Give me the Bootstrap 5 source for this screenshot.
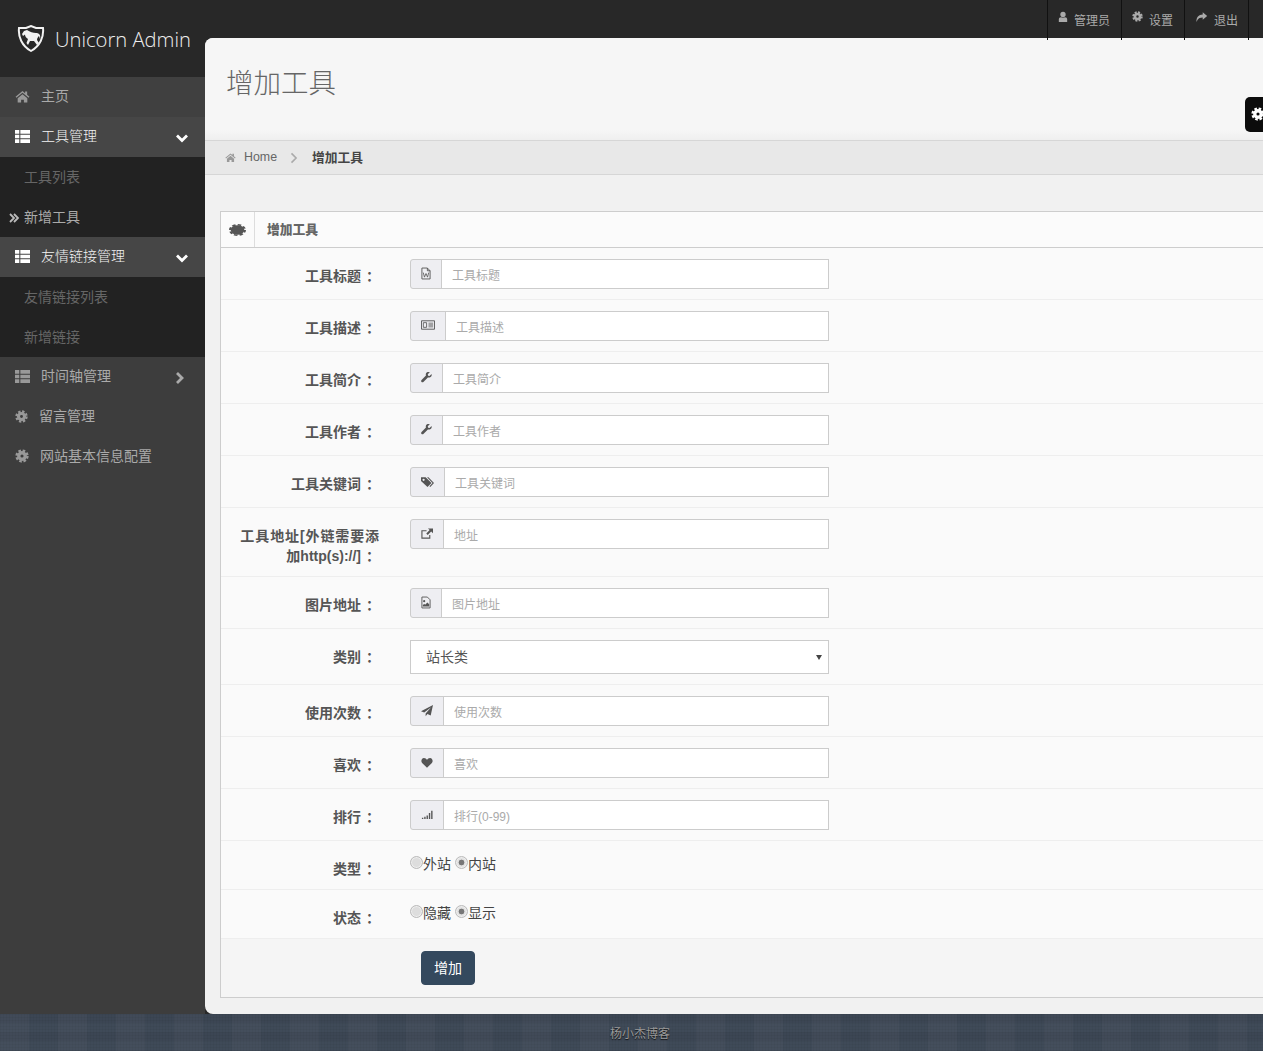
<!DOCTYPE html>
<html lang="zh">
<head>
<meta charset="utf-8">
<title>增加工具</title>
<link href="https://cdn.jsdelivr.net/npm/bootstrap@5.3.0/dist/css/bootstrap.min.css" rel="stylesheet">
<style>
html,body{height:100%;overflow:hidden}
body{font-family:"Liberation Sans","Noto Sans CJK SC",sans-serif;font-size:14px;background:#282828;color:#555}
.uni-shell{height:1014px}
.uni-side{width:205px;flex:none;background:#3d3d3d}
.uni-logo{height:77px;background:#282828;color:#eee;padding-left:17px}
.uni-logo span{font-family:"Open Sans",sans-serif;font-weight:300;font-size:20.2px;margin-left:10px;position:relative;top:1px}
.uni-menu a{display:flex;align-items:center;height:40px;color:#aaa;text-decoration:none;padding:0 0 2px 15px;position:relative;white-space:nowrap}
.uni-menu a svg.lead-ic{margin-right:11px;color:#999}
.uni-home{background:#404040}
.uni-menu a.uni-open{background:#464646;color:#f4f4f4;font-weight:300}
.uni-menu a.uni-open svg{color:#fff}
.uni-menu a .uni-arrow{position:absolute;left:175px;top:14px;margin:0}
.uni-menu a .uni-shut{left:173px;color:#aaa}
.uni-menu a.uni-sub{background:#222;color:#666;padding:0 0 0 24px}
.uni-menu a.uni-sub.uni-now{color:#aaa}
.uni-menu a.uni-sub.uni-now svg{position:absolute;left:9px;top:16px;color:#bbb}
.uni-main{flex:1 1 auto;min-width:0;display:flex;flex-direction:column}
.uni-top{height:38px;flex:none;background:#282828;padding-right:14px;position:relative;z-index:2}
.uni-top a{height:40px;color:#aaa;font-size:12px;text-decoration:none;border-left:1px solid #111;display:flex;align-items:flex-start;padding:13px 11px 0 10px;line-height:16px}
.uni-top a:last-child{border-right:1px solid #111;padding-right:10px}
.uni-top a svg{margin-right:6px;margin-top:-2px;color:#aaa}
.uni-page{flex:1 1 auto;background:#f1f1f1;border-radius:8px 0 0 8px;position:relative;min-height:0}
.uni-head{height:92px;background:#f6f6f6;border-radius:8px 0 0 0;padding:24px 0 0 21px}
.uni-head h1{font-size:27.5px;line-height:44px;font-weight:300;color:#666;margin:0}
.uni-fade{height:10px;background:linear-gradient(#f6f6f6,#efefef)}
.uni-crumb{height:35px;background:#e8e8e8;border-top:1px solid #d6d6d6;border-bottom:1px solid #d6d6d6;padding-left:20px;font-size:12.4px;color:#666}
.uni-crumb b{font-size:12.75px;color:#444;white-space:nowrap;margin-left:1px}
.uni-crumb svg.hm{color:#999;margin-right:8px}
.uni-crumb svg.sp{color:#aaa;margin:0 12px 0 12px}
.uni-gear{position:absolute;right:0;top:59px;width:18px;height:35px;background:#0c0c0c;border-radius:5px 0 0 5px;color:#fff;padding:10px 0 0 6px;overflow:hidden}
.uni-gear svg{display:block}
.uni-box{margin:36px -20px 0 15px;border:1px solid #cdcdcd;background:#fafafa}
.uni-box-title{height:36px;border-bottom:1px solid #cdcdcd;background:#fbfbfb;font-size:12.75px;font-weight:700;color:#666}
.uni-box-ic{width:34px;height:35px;border-right:1px solid #ddd;color:#555}
.uni-box-title b{margin-left:12px;padding-top:1px}
.uni-row{border-bottom:1px solid #eee}
.uni-label{width:156px;flex:none;padding:18px 0 10px;text-align:right;font-weight:700;line-height:20px;color:#555;margin:0}
.uni-colon{font-family:"Noto Sans CJK TC",sans-serif;margin:0 -3px 0 5px;line-height:1}
.uni-wide{display:inline-block;letter-spacing:.9px;margin-right:-3px;white-space:nowrap}
.uni-ctl{margin-left:33px;padding:11px 0 10px;width:419px;flex:none}
.uni-ctl .input-group-text{height:30px;padding:0 10px;background:#eeeef2;border-color:#ccc;border-radius:3px 0 0 3px;color:#555}
.uni-ctl .input-group-text svg{margin-bottom:2px}
.uni-ctl .form-control{height:30px;padding:3px 10px 0;font-size:12px;line-height:25px;border-color:#ccc;border-radius:0}
.uni-ctl .form-control::placeholder{color:#aaa}
.uni-ctl .form-select{height:34px;padding:0 24px 0 15px;font-size:14px;color:#555;border-color:#ccc;border-radius:0;background-size:10px 8px;background-position:right 4px center;background-image:url("data:image/svg+xml,%3Csvg xmlns='http://www.w3.org/2000/svg' viewBox='0 0 10 8'%3E%3Cpath d='M2 2h6L5 7z' fill='%23444'/%3E%3C/svg%3E")}
.uni-radios{padding-top:13px;line-height:20px;color:#444;white-space:nowrap}
.uni-radios label{margin-right:4px;display:inline-flex;align-items:flex-start}
.uni-radios .form-check-input{width:13px;height:13px;margin:2px 0 0;background:#ddd;border:1px solid #bbb;box-shadow:inset 0 0 0 1px #eee;flex:none;float:none}
.uni-radios .form-check-input:checked{background:radial-gradient(circle,#777 0 2.6px,#e2e2e2 3.2px);border-color:#bbb}
.uni-actions{height:58px;background:#f5f5f5;padding:12px 0 0 200px}
.uni-actions .btn{width:54px;height:34px;padding:0;font-size:14px;background:#34495e;border:1px solid #34495e;border-radius:4px;color:#fff;line-height:32px}
.uni-foot{height:37px;color:#999;font-size:12px;padding:2px 0 0 17px;text-shadow:0 1px 1px #111;background-color:#3f4a58;
background-image:linear-gradient(90deg,rgba(255,255,255,.025) 50%,transparent 50%),linear-gradient(rgba(0,0,0,.05) 50%,transparent 50%),linear-gradient(90deg,rgba(0,0,0,.03) 1px,transparent 1px),linear-gradient(rgba(0,0,0,.03) 1px,transparent 1px);
background-size:58px 26px,38px 18px,3px 3px,3px 3px}
</style>
</head>
<body>
<svg width="0" height="0" class="d-block position-absolute">
<defs>
<symbol id="i-home" viewBox="0 0 16 14"><path fill="currentColor" d="M8 1 .5 7.300l1 1.100L8 3l6.500 5.400 1-1.100-2.500-2.100V1.500h-2.200v1.900zM2.800 8.800 8 4.500l5.200 4.300V13.500H9.500v-3h-3v3H2.800z"/></symbol>
<symbol id="i-list" viewBox="1 1 14 12"><path fill="currentColor" d="M1 1h4v3.400H1zM6 1h9v3.400H6zM1 5.300h4v3.400H1zM6 5.300h9v3.400H6zM1 9.600h4v3.400H1zM6 9.600h9v3.400H6z"/></symbol>
<symbol id="i-down" viewBox="0 0 14 14"><path fill="none" stroke="currentColor" stroke-width="2.800" d="m2 4.500 5 5 5-5"/></symbol>
<symbol id="i-right" viewBox="0 0 14 14"><path fill="none" stroke="currentColor" stroke-width="2.800" d="m4 2 5 5-5 5"/></symbol>
<symbol id="i-thin" viewBox="0 0 12 14"><path fill="none" stroke="currentColor" stroke-width="1.900" d="m3 1.500 5.500 5.500L3 12.500"/></symbol>
<symbol id="i-dbl" viewBox="0 0 10 10"><path fill="none" stroke="currentColor" stroke-width="1.800" d="m1 1 4 4-4 4M5 1l4 4-4 4"/></symbol>
<symbol id="i-cog" viewBox="0 0 16 16"><circle cx="8" cy="8" r="3.700" fill="none" stroke="currentColor" stroke-width="3.800"/><circle cx="8" cy="8" r="6.200" fill="none" stroke="currentColor" stroke-width="2.800" stroke-dasharray="2.900 1.970"/></symbol>
<symbol id="i-blob" viewBox="0 0 16 16" preserveAspectRatio="none"><circle cx="8" cy="8" r="6.400" fill="currentColor"/><circle cx="8" cy="8" r="7" fill="none" stroke="currentColor" stroke-width="2" stroke-dasharray="3.400 2.100"/></symbol>
<symbol id="i-user" viewBox="0 0 12 14"><circle cx="6" cy="4" r="3.200" fill="currentColor"/><path fill="currentColor" d="M1 13V9.500Q1 7.500 3.500 7.200L6 8l2.500-.8Q11 7.500 11 9.500V13z"/></symbol>
<symbol id="i-share" viewBox="0 0 16 14"><path fill="currentColor" d="M9.500 1 15 5.800l-5.500 4.700V7.700C6 7.700 3.500 8.800 1.800 13 1.500 7.500 4.500 4.100 9.500 4z"/></symbol>
<symbol id="i-word" viewBox="0 0 11 14"><path fill="none" stroke="currentColor" d="M1 1h6l3 3v9H1zM7 1v3h3"/><path fill="none" stroke="currentColor" stroke-width=".9" d="m2.500 6 1.300 5L5.500 7l1.700 4 1.300-5"/></symbol>
<symbol id="i-card" viewBox="0 0 15 12"><path fill="none" stroke="currentColor" d="M.5 1.500h14v9H.5z"/><path fill="none" stroke="currentColor" stroke-width=".9" d="M2.500 3.500h3.500v5H2.500z"/><path fill="currentColor" d="M8 3.500h5v1H8zM8 5.500h5v1H8zM8 7.500h5v1H8z"/></symbol>
<symbol id="i-wrench" viewBox="0 0 12 14"><path fill="currentColor" d="M11.500 3.200 9.300 5.300 7.800 5l-.4-1.500L9.600 1.300C8 .6 6.200 1 5.500 2.400c-.4.900-.4 1.800-.1 2.500L.6 9.800c-.6.600-.6 1.500 0 2s1.400.6 2 0l4.900-4.900c.8.300 1.700.3 2.500-.1 1.400-.7 2-2.200 1.500-3.600z"/></symbol>
<symbol id="i-tags" viewBox="0 0 14 14"><path fill="currentColor" d="M0 2.500h5l6.300 6.200-4.300 4.300L0 6.500zM2.800 4a1.200 1.200 0 1 0 0 2.400 1.200 1.200 0 0 0 0-2.400z" fill-rule="evenodd"/><path fill="currentColor" d="M6.500 2.500h1.500l6 6.200-4 4.300-.9-.9 3.300-3.400z"/></symbol>
<symbol id="i-ext" viewBox="0 0 13 14"><path fill="none" stroke="currentColor" stroke-width="1.200" d="M9.500 8.500v3.500H1V4h5"/><path fill="currentColor" d="M7.500 1.500H13v5.300l-2-2-3.700 3.800-1.600-1.600L9.400 3.300z"/></symbol>
<symbol id="i-pic" viewBox="0 0 11 14"><path fill="none" stroke="currentColor" d="M1 1h6l3 3v9H1z"/><circle cx="3.500" cy="5.500" r="1.200" fill="currentColor"/><path fill="currentColor" d="M2 11.500v-1.500l1.500-1.500 1 1L7 7l2 2v2.500z"/></symbol>
<symbol id="i-plane" viewBox="0 0 13 13"><path fill="currentColor" d="M13 .5 10.500 12 7 10.300 5 12.800V9.700L11 3 3.500 8.800 0 7.300z"/></symbol>
<symbol id="i-heart" viewBox="0 0 13 12"><path fill="currentColor" d="M6.500 11.800 1.200 6.500C-.4 4.800.5 1 3.200 1c1.500 0 2.600.9 3.300 2 .7-1.100 1.800-2 3.300-2 2.700 0 3.600 3.800 2 5.500z"/></symbol>
<symbol id="i-signal" viewBox="0 0 13 14"><path fill="currentColor" d="M1 10.500h1.500V12H1zM3.500 9.500H5V12H3.500zM6 8h1.500v4H6zM8.500 5.500H10V12H8.500zM11 3h1.500v9H11z"/></symbol>
<symbol id="i-logo" viewBox="0 0 28 27"><path fill="#282828" stroke="#f2f2f2" stroke-width="2" d="M2 3h7l5-2 5 2h7c1 9-3 18-12 23C5 21 1 12 2 3z"/><path fill="#f2f2f2" d="M7 6l3-1c3 2 6 3 9 3 3 0 5 2 4 6l-1-3c-1 1-2 2-2 4l2 3-2 2-3-4h-4l-2 4-1.500-2 1.500-4c-2-1-3-3-3-4.500L6 11 5 9z"/></symbol>
</defs>
</svg>
<div class="uni-shell d-flex">
  <aside class="uni-side">
    <div class="uni-logo d-flex align-items-center"><svg width="28" height="27"><use href="#i-logo"/></svg><span>Unicorn Admin</span></div>
    <nav class="uni-menu">
      <a href="#" class="uni-home"><svg class="lead-ic" width="15" height="13"><use href="#i-home"/></svg>主页</a>
      <a href="#" class="uni-open"><svg class="lead-ic" width="15" height="13"><use href="#i-list"/></svg>工具管理<svg class="uni-arrow" width="14" height="14"><use href="#i-down"/></svg></a>
      <a href="#" class="uni-sub">工具列表</a>
      <a href="#" class="uni-sub uni-now"><svg width="10" height="10"><use href="#i-dbl"/></svg>新增工具</a>
      <a href="#" class="uni-open"><svg class="lead-ic" width="15" height="13"><use href="#i-list"/></svg>友情链接管理<svg class="uni-arrow" width="14" height="14"><use href="#i-down"/></svg></a>
      <a href="#" class="uni-sub">友情链接列表</a>
      <a href="#" class="uni-sub">新增链接</a>
      <a href="#"><svg class="lead-ic" width="15" height="13"><use href="#i-list"/></svg>时间轴管理<svg class="uni-arrow uni-shut" width="14" height="14"><use href="#i-right"/></svg></a>
      <a href="#"><svg class="lead-ic" width="13" height="13"><use href="#i-cog"/></svg>留言管理</a>
      <a href="#"><svg class="lead-ic" width="14" height="14"><use href="#i-cog"/></svg>网站基本信息配置</a>
    </nav>
  </aside>
  <main class="uni-main">
    <div class="uni-top d-flex justify-content-end">
      <a href="#"><svg width="10" height="12"><use href="#i-user"/></svg>管理员</a>
      <a href="#"><svg width="11" height="11"><use href="#i-cog"/></svg>设置</a>
      <a href="#"><svg width="13" height="12"><use href="#i-share"/></svg>退出</a>
    </div>
    <div class="uni-page">
      <div class="uni-head"><h1>增加工具</h1></div>
      <div class="uni-fade"></div>
      <div class="uni-crumb d-flex align-items-center"><svg class="hm" width="11" height="11"><use href="#i-home"/></svg>Home<svg class="sp" width="10" height="12"><use href="#i-thin"/></svg><b>增加工具</b></div>
      <div class="uni-gear"><svg width="14" height="14"><use href="#i-cog"/></svg></div>
      <section class="uni-box">
        <div class="uni-box-title d-flex align-items-center"><span class="uni-box-ic d-flex align-items-center justify-content-center"><svg width="17" height="12"><use href="#i-blob"/></svg></span><b>增加工具</b></div>
        <form>
          <div class="uni-row d-flex"><label class="uni-label">工具标题<span class="uni-colon">：</span></label><div class="uni-ctl"><div class="input-group"><span class="input-group-text"><svg width="10" height="13"><use href="#i-word"/></svg></span><input class="form-control" placeholder="工具标题"></div></div></div>
          <div class="uni-row d-flex"><label class="uni-label">工具描述<span class="uni-colon">：</span></label><div class="uni-ctl"><div class="input-group"><span class="input-group-text"><svg width="14" height="12"><use href="#i-card"/></svg></span><input class="form-control" placeholder="工具描述"></div></div></div>
          <div class="uni-row d-flex"><label class="uni-label">工具简介<span class="uni-colon">：</span></label><div class="uni-ctl"><div class="input-group"><span class="input-group-text"><svg width="11" height="13"><use href="#i-wrench"/></svg></span><input class="form-control" placeholder="工具简介"></div></div></div>
          <div class="uni-row d-flex"><label class="uni-label">工具作者<span class="uni-colon">：</span></label><div class="uni-ctl"><div class="input-group"><span class="input-group-text"><svg width="11" height="13"><use href="#i-wrench"/></svg></span><input class="form-control" placeholder="工具作者"></div></div></div>
          <div class="uni-row d-flex"><label class="uni-label">工具关键词<span class="uni-colon">：</span></label><div class="uni-ctl"><div class="input-group"><span class="input-group-text"><svg width="13" height="13"><use href="#i-tags"/></svg></span><input class="form-control" placeholder="工具关键词"></div></div></div>
          <div class="uni-row d-flex"><label class="uni-label"><span class="uni-wide">工具地址[外链需要添</span><br>加http(s)://]<span class="uni-colon">：</span></label><div class="uni-ctl"><div class="input-group"><span class="input-group-text"><svg width="12" height="13"><use href="#i-ext"/></svg></span><input class="form-control" placeholder="地址"></div></div></div>
          <div class="uni-row d-flex"><label class="uni-label">图片地址<span class="uni-colon">：</span></label><div class="uni-ctl"><div class="input-group"><span class="input-group-text"><svg width="10" height="13"><use href="#i-pic"/></svg></span><input class="form-control" placeholder="图片地址"></div></div></div>
          <div class="uni-row d-flex"><label class="uni-label">类别<span class="uni-colon">：</span></label><div class="uni-ctl"><select class="form-select"><option>站长类</option></select></div></div>
          <div class="uni-row d-flex"><label class="uni-label">使用次数<span class="uni-colon">：</span></label><div class="uni-ctl"><div class="input-group"><span class="input-group-text"><svg width="12" height="13"><use href="#i-plane"/></svg></span><input class="form-control" placeholder="使用次数"></div></div></div>
          <div class="uni-row d-flex"><label class="uni-label">喜欢<span class="uni-colon">：</span></label><div class="uni-ctl"><div class="input-group"><span class="input-group-text"><svg width="12" height="13"><use href="#i-heart"/></svg></span><input class="form-control" placeholder="喜欢"></div></div></div>
          <div class="uni-row d-flex"><label class="uni-label">排行<span class="uni-colon">：</span></label><div class="uni-ctl"><div class="input-group"><span class="input-group-text"><svg width="12" height="13"><use href="#i-signal"/></svg></span><input class="form-control" placeholder="排行(0-99)"></div></div></div>
          <div class="uni-row d-flex"><label class="uni-label">类型<span class="uni-colon">：</span></label><div class="uni-ctl uni-radios"><label><input class="form-check-input" type="radio" name="a">外站</label><label><input class="form-check-input" type="radio" name="a" checked>内站</label></div></div>
          <div class="uni-row d-flex"><label class="uni-label">状态<span class="uni-colon">：</span></label><div class="uni-ctl uni-radios"><label><input class="form-check-input" type="radio" name="b">隐藏</label><label><input class="form-check-input" type="radio" name="b" checked>显示</label></div></div>
          <div class="uni-actions"><button type="button" class="btn">增加</button></div>
        </form>
      </section>
    </div>
  </main>
</div>
<footer class="uni-foot d-flex align-items-center justify-content-center">杨小杰博客</footer>
<script src="https://cdn.jsdelivr.net/npm/bootstrap@5.3.0/dist/js/bootstrap.bundle.min.js"></script>
</body>
</html>
